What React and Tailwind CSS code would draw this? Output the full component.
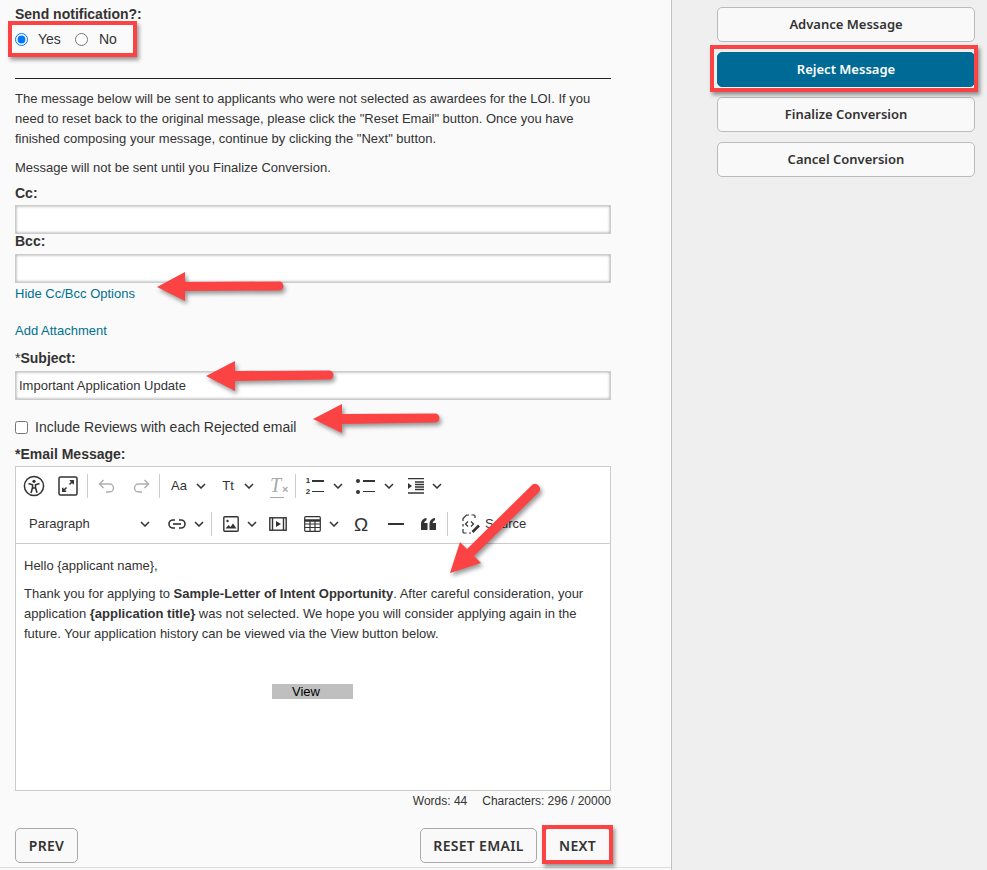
import React from 'react';

const sans = "font-['Liberation_Sans',Arial,sans-serif]";
const btnFont = "font-['Noto_Sans',sans-serif]";

function Chevron({ className = '' }) {
  return (
    <span className={`flex items-center justify-center ${className}`}>
      <svg width="10" height="6" viewBox="0 0 10 6" fill="none" stroke="#333" strokeWidth="1.5"><path d="M1 1l4 4 4-4" /></svg>
    </span>
  );
}

function Sep({ className = '' }) {
  return <span className={`w-px h-[24px] bg-[#ccc] shrink-0 ${className}`} />;
}

function Cell({ className = '', children }) {
  return <span className={`flex items-center justify-center shrink-0 h-full ${className}`}>{children}</span>;
}

function TextField({ value }) {
  return (
    <input
      readOnly
      defaultValue={value}
      className="block w-[596px] h-[29px] bg-white border border-[#ccc] shadow-[inset_0_0_3px_#999] px-[3px] text-[13px] text-[#333] outline-none"
    />
  );
}

function SideButton({ children, active }) {
  return (
    <button className={`${btnFont} w-[258px] h-[35px] rounded-[5px] border text-[13px] font-semibold ${active ? 'bg-[#006a96] border-[#006a96] text-white' : 'bg-[#f9f9f9] border-[#bbb] text-[#333]'}`}>
      {children}
    </button>
  );
}

function FootButton({ className = '', children }) {
  return (
    <button className={`${btnFont} h-[35px] rounded-[5px] border border-[#aaa] bg-[#f9f9f9] text-[14px] font-semibold text-[#333] tracking-[0.3px] ${className}`}>
      {children}
    </button>
  );
}

function Toolbar() {
  return (
    <div className="border-b border-[#ccc] text-[#333]">
      <div className="flex items-center h-[38px]">
        <Cell className="w-[34px] ml-px">
          <svg width="22" height="22" viewBox="0 0 22 22" fill="none" stroke="#333"><circle cx="11" cy="11" r="9.6" strokeWidth="1.5" /><circle cx="11" cy="6.3" r="1.6" fill="#333" stroke="none" /><path d="M5.5 8.5l4 1.3v3L8 18M16.5 8.5l-4 1.3v3l1.500 5M9.500 13h3" strokeWidth="1.600" /></svg>
        </Cell>
        <Cell className="w-[34px]">
          <svg width="20" height="20" viewBox="0 0 20 20" fill="none" stroke="#333" strokeWidth="1.500"><rect x="1" y="1" width="18" height="18" rx="1.500" /><path d="M11.500 8.500L15 5M5 15l3.500-3.500M11.800 4.800h3.400v3.400M4.800 11.800v3.400h3.400" /></svg>
        </Cell>
        <Sep className="ml-[2px]" />
        <Cell className="w-[34px] ml-[2px]">
          <svg width="18" height="14" viewBox="0 0 18 14" fill="none" stroke="#b0b0b0" strokeWidth="1.500"><path d="M5.500 1L1.500 5l4 4M1.500 5h10a4 4 0 010 8H8" /></svg>
        </Cell>
        <Cell className="w-[34px]">
          <svg width="18" height="14" viewBox="0 0 18 14" fill="none" stroke="#b0b0b0" strokeWidth="1.500"><path d="M12.500 1l4 4-4 4M16.500 5h-10a4 4 0 000 8H10" /></svg>
        </Cell>
        <Sep className="ml-px" />
        <Cell className="w-[26px] ml-[6px] text-[13px]">Aa</Cell>
        <Chevron className="w-[18px] h-full" />
        <Cell className="w-[26px] ml-[5px] text-[13px]">Tt</Cell>
        <Chevron className="w-[16px] h-full" />
        <Cell className="w-[26px] ml-[7px]">
          <span className="relative font-['Liberation_Serif',serif] italic text-[20px] text-[#aaa] leading-none pb-[2px] border-b border-[#aaa] pr-[3px]">T<span className="absolute left-[12px] top-[9px] not-italic font-bold text-[11px] font-['Liberation_Sans',sans-serif]">×</span></span>
        </Cell>
        <Sep className="ml-[5px]" />
        <Cell className="w-[26px] ml-[6px]">
          <span className="flex flex-col text-[8px] font-bold leading-[11px] mr-[2px]"><span>1</span><span>2</span></span>
          <span className="flex flex-col gap-[9px]"><span className="block w-[12px] h-[1.500px] bg-[#333]" /><span className="block w-[12px] h-[1.500px] bg-[#333]" /></span>
        </Cell>
        <Chevron className="w-[16px] h-full ml-[2px]" />
        <Cell className="w-[26px] ml-[6px]">
          <span className="flex flex-col gap-[7px] mr-[3px]"><span className="block w-[4px] h-[4px] rounded-full bg-[#333]" /><span className="block w-[4px] h-[4px] rounded-full bg-[#333]" /></span>
          <span className="flex flex-col gap-[9px]"><span className="block w-[12px] h-[1.500px] bg-[#333]" /><span className="block w-[12px] h-[1.500px] bg-[#333]" /></span>
        </Cell>
        <Chevron className="w-[16px] h-full ml-[3px]" />
        <Cell className="w-[26px] ml-[6px]">
          <svg width="18" height="16" viewBox="0 0 18 16" fill="none" stroke="#333" strokeWidth="1.300"><path d="M1 .7h16M8 4h9M8 6.500h9M8 9h9M8 11.500h9M1 15h16" /><path d="M1 5l4 3-4 3z" fill="#333" stroke="none" /></svg>
        </Cell>
        <Chevron className="w-[16px] h-full" />
      </div>
      <div className="flex items-center h-[38px]">
        <span className="w-[108px] ml-[13px] text-[13px] text-[#333] shrink-0">Paragraph</span>
        <Chevron className="w-[16px] h-full" />
        <Cell className="w-[26px] ml-[11px]">
          <svg width="18" height="10" viewBox="0 0 18 10" fill="none" stroke="#333" strokeWidth="1.600"><path d="M7 1H5a4 4 0 000 8h2M11 1h2a4 4 0 010 8h-2" /><path d="M5 5h8" /></svg>
        </Cell>
        <Chevron className="w-[16px] h-full ml-px" />
        <Sep className="ml-[4px]" />
        <Cell className="w-[26px] ml-[6px]">
          <svg width="16" height="16" viewBox="0 0 16 16" fill="none" stroke="#333" strokeWidth="1.400"><rect x=".8" y=".8" width="14.400" height="14.400" rx="1" /><circle cx="4.500" cy="5" r="1.200" fill="#333" stroke="none" /><path d="M2.500 12.500l3-3.500 2 2 2.500-3.500 3.500 5z" fill="#333" stroke="none" /></svg>
        </Cell>
        <Chevron className="w-[16px] h-full" />
        <Cell className="w-[26px] ml-[5px]">
          <svg width="18" height="14" viewBox="0 0 18 14" fill="none" stroke="#333" strokeWidth="1.400"><rect x=".8" y=".8" width="16.400" height="12.400" /><path d="M3.500 1v12M14.500 1v12" /><path d="M7 4l5 3-5 3z" fill="#333" stroke="none" /></svg>
        </Cell>
        <Cell className="w-[26px] ml-[8px]">
          <svg width="17" height="16" viewBox="0 0 17 16" fill="none" stroke="#333" strokeWidth="1.200"><rect x=".7" y=".7" width="15.600" height="14.600" rx="1" /><path d="M.7 4.500h15.600" strokeWidth="2.500" /><path d="M.7 8h15.600M.7 11.500h15.600M6 4v11M11 4v11" /></svg>
        </Cell>
        <Chevron className="w-[14px] h-full ml-[2px]" />
        <Cell className="w-[26px] ml-[7px]">
          <span className="text-[19px] leading-none font-['Liberation_Sans',sans-serif]">Ω</span>
        </Cell>
        <Cell className="w-[26px] ml-[9px]"><span className="block w-[16px] h-[2px] bg-[#333]" /></Cell>
        <Cell className="w-[26px] ml-[6px]">
          <svg width="15" height="12" viewBox="0 0 15 12" fill="#333"><path d="M0 12V6.500C0 3 1.500.8 5.500 0v2.200C4 2.800 3.300 3.700 3.200 5H6.500v7zM8.500 12V6.500C8.500 3 10 .8 14 0v2.200c-1.500.6-2.200 1.500-2.300 2.800H15v7z" /></svg>
        </Cell>
        <Sep className="ml-[6px]" />
        <Cell className="w-[22px] ml-[12px]">
          <svg width="20" height="20" viewBox="0 0 20 20" fill="none" stroke="#333" strokeWidth="1.200">
            <path d="M2 7V4.500L5.500 1H8M10.500 1h2.500a1 1 0 011 1v2M2 10v2.500M2 15v3a1 1 0 001 1h2.500M8 19h2" />
            <path d="M7 7.500L4.500 10 7 12.500M10 7.500l2.500 2.500L10 12.500" />
            <path d="M11.500 18l6.500-6.500" strokeWidth="2.600" />
          </svg>
        </Cell>
        <span className="ml-[3px] text-[13px] text-[#333]">Source</span>
      </div>
    </div>
  );
}

function Annotations() {
  const shadow = 'drop-shadow-[2px_3px_2px_rgba(0,0,0,0.4)]';
  return (
    <>
      <div className="absolute left-[8px] top-[21px] w-[129px] h-[36px] border-[4px] border-[#fb4343] shadow-[2px_3px_4px_rgba(0,0,0,0.4)]" />
      <div className="absolute left-[710px] top-[45px] w-[268px] h-[47px] border-[4px] border-[#fb4343] shadow-[2px_3px_4px_rgba(0,0,0,0.4)]" />
      <div className="absolute left-[542px] top-[825px] w-[71px] h-[39px] border-[4px] border-[#fb4343] shadow-[2px_3px_4px_rgba(0,0,0,0.4)]" />
      <svg className={`absolute left-0 top-0 pointer-events-none ${shadow}`} width="987" height="870" fill="#fb4343" stroke="none">
        <path d="M157 287L185 272V282L279 281.500a4.500 4.500 0 010 9L185 291V301z" />
        <path d="M206 376L235 361V371L329 370.500a4.500 4.500 0 010 9L235 381V391z" />
        <path d="M313 419L342 404V414L435 413.500a4.500 4.500 0 010 9L342 424V433z" />
        <path d="M450 573L460 542L467 549L532 485a5 5 0 017 7L474 556L481 563z" />
      </svg>
    </>
  );
}

export default function App() {
  return (
    <div className={`${sans} relative flex w-[987px] h-[870px] overflow-hidden bg-[#fafafa] text-[#333] text-[14px]`}>
      <main className="w-[671px] h-[868px] shrink-0 pl-[15px] border-b border-[#ddd]">
        <div className="w-[596px]">
          <div className="h-[28px] pt-[6px] font-bold leading-[16px]">Send notification?:</div>
          <div className="flex items-center h-[22px]">
            <input type="radio" name="notify" defaultChecked className="w-[13px] h-[13px] m-0" />
            <span className="ml-[10px] w-[38px]">Yes</span>
            <input type="radio" name="notify" className="w-[13px] h-[13px] m-0 ml-[-1px]" />
            <span className="ml-[11px]">No</span>
          </div>
          <div className="mt-[28px] h-px bg-[#222]" />
          <p className="mt-[10px] text-[13px] leading-[20px]">
            The message below will be sent to applicants who were not selected as awardees for the LOI. If you need to reset back to the original message, please click the "Reset Email" button. Once you have finished composing your message, continue by clicking the "Next" button.
          </p>
          <p className="mt-[9px] text-[13px] leading-[20px]">Message will not be sent until you Finalize Conversion.</p>
          <label className="block mt-[5px] h-[22px] font-bold leading-[20px]">Cc:</label>
          <TextField />
          <label className="block h-[23px] mt-[-3px] font-bold leading-[20px]">Bcc:</label>
          <TextField />
          <a className="block mt-[1px] h-[20px] leading-[20px] text-[13px] text-[#00708f]">Hide Cc/Bcc Options</a>
          <a className="block mt-[17px] h-[20px] leading-[20px] text-[13px] text-[#00708f]">Add Attachment</a>
          <label className="block mt-[7px] h-[23px] font-bold leading-[20px]"><span className="font-normal">*</span>Subject:</label>
          <TextField value="Important Application Update" />
          <div className="flex items-center h-[20px] mt-[17px]">
            <input type="checkbox" className="w-[13px] h-[13px] m-0" />
            <span className="ml-[7px]">Include Reviews with each Rejected email</span>
          </div>
          <label className="block mt-[7px] h-[20px] font-bold leading-[20px]">*Email Message:</label>
          <section className="h-[325px] mt-[2px] bg-white border border-[#ccc]">
            <Toolbar />
            <div className="px-[8px] pt-[12px] text-[13px] leading-[20px]">
              <p>Hello {'{applicant name}'},</p>
              <p className="mt-[8px]">
                Thank you for applying to <b>Sample-Letter of Intent Opportunity</b>. After careful consideration, your application <b>{'{application title}'}</b> was not selected. We hope you will consider applying again in the future. Your application history can be viewed via the View button below.
              </p>
              <div className="mt-[40px] ml-[248px] w-[81px] h-[15px] bg-[#bfbfbf] text-[13px] leading-[15px] text-black pl-[20px]">View</div>
            </div>
          </section>
          <div className="flex justify-end gap-[15px] h-[20px] leading-[20px] text-[12px]">
            <span>Words: 44</span>
            <span>Characters: 296 / 20000</span>
          </div>
          <div className="flex items-center mt-[17px]">
            <FootButton className="w-[63px]">PREV</FootButton>
            <FootButton className="w-[117px] ml-auto">RESET EMAIL</FootButton>
            <FootButton className="w-[67px] ml-[7px]">NEXT</FootButton>
          </div>
        </div>
      </main>
      <aside className="flex-1 h-full bg-[#efefef] border-l border-[#c4c4c4] pl-[45px] pt-[7px] flex flex-col gap-[10px]">
        <SideButton>Advance Message</SideButton>
        <SideButton active>Reject Message</SideButton>
        <SideButton>Finalize Conversion</SideButton>
        <SideButton>Cancel Conversion</SideButton>
      </aside>
      <Annotations />
    </div>
  );
}
